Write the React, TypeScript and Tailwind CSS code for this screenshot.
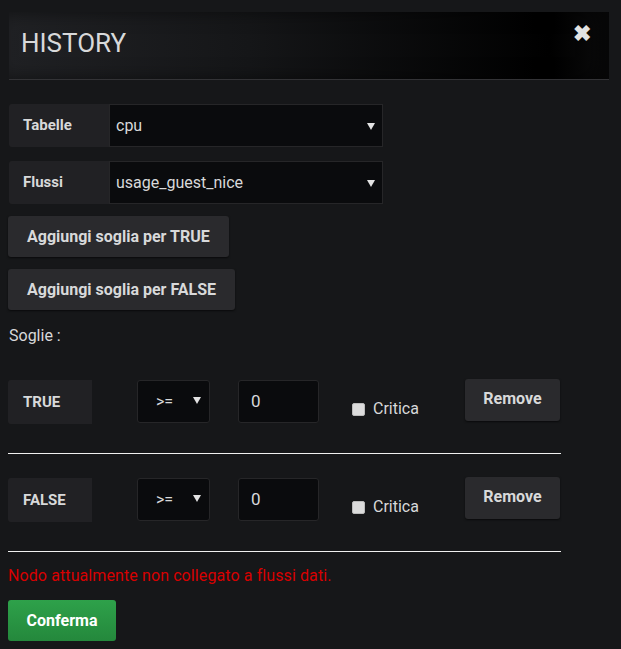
import React, { useState } from 'react';

interface Soglia {
  tipo: string;
  op: string;
  valore: string;
  critica: boolean;
}

const Caret: React.FC = () => (
  <svg width="8" height="8" viewBox="0 0 8 8" className="shrink-0">
    <path d="M0 1 L8 1 L4 8 Z" fill="#e3e3e3" />
  </svg>
);

const SelectRow: React.FC<{ label: string; value: string }> = ({ label, value }) => (
  <div className="flex h-[43px] ml-px">
    <div className="w-[100px] bg-[#212124] rounded-l-[3px] flex items-center pl-[14px] text-[15px] font-bold text-[#d8d9da]">
      {label}
    </div>
    <div className="w-[274px] bg-[#0a0b0d] border border-[#262628] flex items-center justify-between pl-[6px] pr-[7px] text-[16px] text-[#d8d9da]">
      <span>{value}</span>
      <Caret />
    </div>
  </div>
);

const SogliaRow: React.FC<{ s: Soglia }> = ({ s }) => (
  <div>
    <div className="flex items-start h-[44px]">
      <div className="w-[84px] h-[44px] bg-[#212124] rounded-l-[3px] flex items-center pl-[15px] text-[15px] font-bold text-[#d8d9da]">
        {s.tipo}
      </div>
      <div className="ml-[45px] w-[73px] h-[43px] bg-[#0a0b0d] border border-[#262628] rounded-[3px] flex items-center pl-[18px] pr-[8px] justify-between text-[16px] text-[#d8d9da]">
        <span>{s.op}</span>
        <span className="-mt-[3px]"><Caret /></span>
      </div>
      <div className="ml-[28px] w-[81px] h-[43px] bg-[#0a0b0d] border border-[#262628] rounded-[3px] flex items-center pl-[12px] text-[17px] text-[#d8d9da]">
        {s.valore}
      </div>
      <div className="ml-[33px] mt-[17px] flex items-center gap-[8px]">
        <div className="w-[13px] h-[13px] rounded-[2px] bg-[#dcdcdc] border border-[#bbb]" />
        <span className="text-[16px] text-[#d8d9da]">Critica</span>
      </div>
      <button className="ml-[46px] -mt-px w-[95px] h-[42px] bg-[#2a2a2d] rounded-[3px] shadow-[0_1px_2px_rgba(0,0,0,0.6)] text-[16px] font-bold text-[#d8d9da] flex items-center justify-center pb-[3px]">
        Remove
      </button>
    </div>
    <div className="mt-[29px] w-[553px] h-px bg-[#f0f0f0]" />
  </div>
);

const App: React.FC = () => {
  const [soglie] = useState<Soglia[]>([
    { tipo: 'TRUE', op: '>=', valore: '0', critica: false },
    { tipo: 'FALSE', op: '>=', valore: '0', critica: false },
  ]);

  return (
    <div className="min-h-[649px] w-[621px] bg-[#161719] pt-[12px] px-[8px] font-['Roboto','Liberation_Sans',sans-serif]">
      <div className="ml-px w-[600px] h-[68px] border-b border-[#333336] bg-[linear-gradient(90deg,#202124_0%,#151618_40%,#000000_90%,#0c0c0d_100%)] shadow-[inset_-12px_0_18px_rgba(0,0,0,0.5)] flex items-center justify-between pl-[12px] pr-[18px]">
        <h1 className="text-[26px] text-[#d8d9da] leading-none -mt-[6px]">HISTORY</h1>
        <span className="text-[22px] font-bold text-[#e3e3e3] leading-none -mt-[24px]">✖</span>
      </div>

      <div className="mt-[24px] flex flex-col gap-[14px]">
        <SelectRow label="Tabelle" value="cpu" />
        <SelectRow label="Flussi" value="usage_guest_nice" />
      </div>

      <div className="mt-[12px] flex flex-col items-start gap-[12px]">
        <button className="h-[41px] px-[19px] bg-[#2a2a2d] rounded-[3px] shadow-[0_1px_2px_rgba(0,0,0,0.6)] text-[16px] font-bold text-[#d8d9da]">
          Aggiungi soglia per TRUE
        </button>
        <button className="h-[41px] px-[19px] bg-[#2a2a2d] rounded-[3px] shadow-[0_1px_2px_rgba(0,0,0,0.6)] text-[16px] font-bold text-[#d8d9da]">
          Aggiungi soglia per FALSE
        </button>
      </div>

      <div className="mt-[14px] ml-px text-[16px] text-[#d8d9da]">Soglie :</div>

      <div className="mt-[32px] flex flex-col gap-[24px]">
        {soglie.map((s) => (
          <SogliaRow key={s.tipo} s={s} />
        ))}
      </div>

      <div className="mt-[12px] text-[16px] tracking-[0.1px] text-[#d80000]">
        Nodo attualmente non collegato a flussi dati.
      </div>

      <button className="mt-[12px] h-[41px] w-[108px] rounded-[3px] bg-[linear-gradient(180deg,#2ea14a,#24883c)] text-[16px] font-bold text-white">
        Conferma
      </button>
    </div>
  );
};

export default App;
